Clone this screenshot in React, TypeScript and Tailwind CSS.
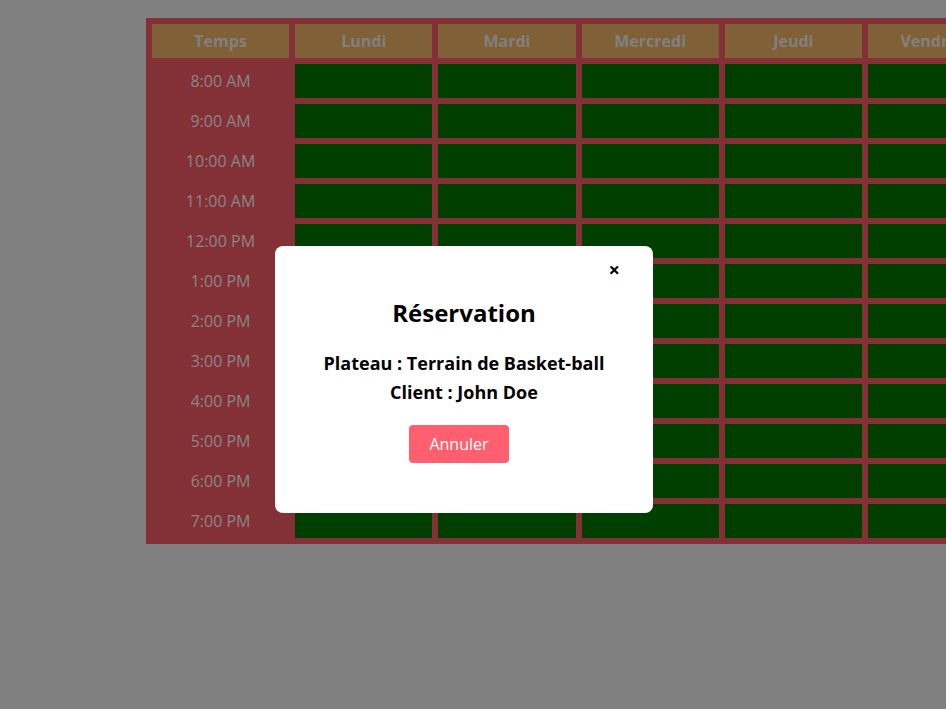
const days = ["Lundi", "Mardi", "Mercredi", "Jeudi", "Vendredi", "Samedi", "Dimanche"];
const hours = [
	"8:00 AM",
	"9:00 AM",
	"10:00 AM",
	"11:00 AM",
	"12:00 PM",
	"1:00 PM",
	"2:00 PM",
	"3:00 PM",
	"4:00 PM",
	"5:00 PM",
	"6:00 PM",
	"7:00 PM",
];

export default function App() {
	return (
		<div
			className="relative h-[709px] w-[946px] overflow-hidden bg-[#808080]"
			style={{ fontFamily: "'Open Sans', sans-serif" }}
		>
			{/* Schedule (dimmed behind the overlay) */}
			<div className="ml-[146px] pt-[18px]">
				<table className="border-separate border-spacing-[6px] bg-[#833037]">
					<thead>
						<tr>
							<th className="h-[34px] w-[137.2px] min-w-[137.2px] bg-[#806137] text-[16px] font-bold text-[#808080]">
								Temps
							</th>
							{days.map((d) => (
								<th
									key={d}
									className="h-[34px] w-[137.2px] min-w-[137.2px] whitespace-nowrap bg-[#806137] text-[16px] font-bold text-[#808080]"
								>
									{d}
								</th>
							))}
						</tr>
					</thead>
					<tbody>
						{hours.map((h) => (
							<tr key={h}>
								<td className="h-[34px] text-center text-[16px] text-[#888888]">{h}</td>
								{days.map((d) => (
									<td key={d} className="h-[34px] bg-[#003f00]" />
								))}
							</tr>
						))}
					</tbody>
				</table>
			</div>

			{/* Modal */}
			<div className="absolute left-[275px] top-[246px] flex h-[267px] w-[378px] flex-col items-center rounded-lg bg-white">
				<button className="absolute right-[33px] top-[14px] text-[20px] font-bold leading-none text-black">
					×
				</button>
				<h2 className="mt-[49px] text-[24px] font-bold text-black">Réservation</h2>
				<div className="mt-[18px] text-center text-[18px] font-bold leading-[29px] text-black">
					<p>Plateau : Terrain de Basket-ball</p>
					<p>Client : John Doe</p>
				</div>
				<button className="mr-[10px] mt-[18px] h-[38px] w-[100px] rounded bg-[#ff5f6e] text-[16px] text-white">
					Annuler
				</button>
			</div>
		</div>
	);
}
